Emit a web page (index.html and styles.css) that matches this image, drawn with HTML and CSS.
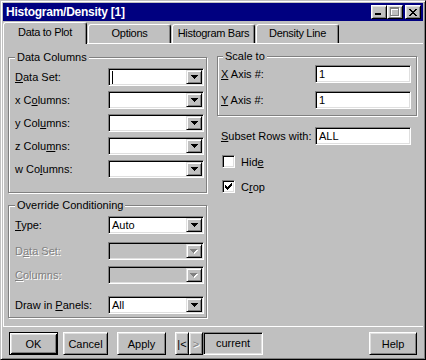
FILE: index.html
```html
<!DOCTYPE html>
<html lang="en">
<head>
    <meta charset="UTF-8">
    <title>Histogram/Density [1]</title>
    <link rel="stylesheet" href="styles.css">
</head>
<body>
    <div class="window">
        <div class="titlebar">
            <span class="title">Histogram/Density [1]</span>
            <div class="title-btns">
                <div class="tbtn tbtn-min">
                    <svg width="6" height="2"><rect width="6" height="2" fill="#000"/></svg>
                </div>
                <div class="tbtn tbtn-max">
                    <svg width="10" height="10" shape-rendering="crispEdges">
                        <path d="M1 1h9v9h-9z M2 3v6h7v-6z" fill="#fff" fill-rule="evenodd"/>
                        <path d="M0 0h9v9h-9z M1 2v6h7v-6z" fill="#808080" fill-rule="evenodd"/>
                    </svg>
                </div>
                <div class="tbtn tbtn-close">
                    <svg width="8" height="7" shape-rendering="crispEdges">
                        <path d="M0 0h2v1h-2z M6 0h2v1h-2z M1 1h2v1h-2z M5 1h2v1h-2z M2 2h4v1h-4z M3 3h2v1h-2z M2 4h4v1h-4z M1 5h2v1h-2z M5 5h2v1h-2z M0 6h2v1h-2z M6 6h2v1h-2z" fill="#000"/>
                    </svg>
                </div>
            </div>
        </div>

        <div class="tabs">
            <div class="tab active">Data to Plot</div>
            <div class="tab">Options</div>
            <div class="tab">Histogram Bars</div>
            <div class="tab">Density Line</div>
        </div>

        <div class="panel">
            <div class="col col-left">
                <div class="group group-data">
                    <span class="group-title">Data Columns</span>
                    <div class="rows">
                        <div class="row">
                            <span><u>D</u>ata Set:</span>
                            <div class="combo"><span class="combo-text"><i class="caret"></i></span><span class="drop"><svg width="7" height="4" shape-rendering="crispEdges"><path d="M0 0H7V1H6V2H5V3H4V4H3V3H2V2H1V1H0Z"/></svg></span></div>
                        </div>
                        <div class="row">
                            <span>x C<u>o</u>lumns:</span>
                            <div class="combo"><span class="combo-text"></span><span class="drop"><svg width="7" height="4" shape-rendering="crispEdges"><path d="M0 0H7V1H6V2H5V3H4V4H3V3H2V2H1V1H0Z"/></svg></span></div>
                        </div>
                        <div class="row">
                            <span>y Col<u>u</u>mns:</span>
                            <div class="combo"><span class="combo-text"></span><span class="drop"><svg width="7" height="4" shape-rendering="crispEdges"><path d="M0 0H7V1H6V2H5V3H4V4H3V3H2V2H1V1H0Z"/></svg></span></div>
                        </div>
                        <div class="row">
                            <span>z Colu<u>m</u>ns:</span>
                            <div class="combo"><span class="combo-text"></span><span class="drop"><svg width="7" height="4" shape-rendering="crispEdges"><path d="M0 0H7V1H6V2H5V3H4V4H3V3H2V2H1V1H0Z"/></svg></span></div>
                        </div>
                        <div class="row">
                            <span>w Co<u>l</u>umns:</span>
                            <div class="combo"><span class="combo-text"></span><span class="drop"><svg width="7" height="4" shape-rendering="crispEdges"><path d="M0 0H7V1H6V2H5V3H4V4H3V3H2V2H1V1H0Z"/></svg></span></div>
                        </div>
                    </div>
                </div>

                <div class="group group-override">
                    <span class="group-title">Override Conditioning</span>
                    <div class="row row-type">
                        <span><u>T</u>ype:</span>
                        <div class="combo"><span class="combo-text">Auto</span><span class="drop"><svg width="7" height="4" shape-rendering="crispEdges"><path d="M0 0H7V1H6V2H5V3H4V4H3V3H2V2H1V1H0Z"/></svg></span></div>
                    </div>
                    <div class="row row-dset">
                        <span class="disabled">D<u>a</u>ta Set:</span>
                        <div class="combo off"><span class="combo-text"></span><span class="drop"><svg width="8" height="5" shape-rendering="crispEdges"><path d="M1 1H8V2H7V3H6V4H5V5H4V4H3V3H2V2H1Z" fill="#fff"/><path d="M0 0H7V1H6V2H5V3H4V4H3V3H2V2H1V1H0Z" fill="#808080"/></svg></span></div>
                    </div>
                    <div class="row row-cols">
                        <span class="disabled"><u>C</u>olumns:</span>
                        <div class="combo off"><span class="combo-text"></span><span class="drop"><svg width="8" height="5" shape-rendering="crispEdges"><path d="M1 1H8V2H7V3H6V4H5V5H4V4H3V3H2V2H1Z" fill="#fff"/><path d="M0 0H7V1H6V2H5V3H4V4H3V3H2V2H1V1H0Z" fill="#808080"/></svg></span></div>
                    </div>
                    <div class="row row-panels">
                        <span>Draw in <u>P</u>anels:</span>
                        <div class="combo"><span class="combo-text">All</span><span class="drop"><svg width="7" height="4" shape-rendering="crispEdges"><path d="M0 0H7V1H6V2H5V3H4V4H3V3H2V2H1V1H0Z"/></svg></span></div>
                    </div>
                </div>
            </div>

            <div class="col col-right">
                <div class="group group-scale">
                    <span class="group-title">Scale to</span>
                    <div class="row row-x">
                        <span><u>X</u> Axis #:</span>
                        <div class="field">1</div>
                    </div>
                    <div class="row row-y">
                        <span><u>Y</u> Axis #:</span>
                        <div class="field">1</div>
                    </div>
                </div>

                <div class="row row-subset">
                    <span><u>S</u>ubset Rows with:</span>
                    <div class="field">ALL</div>
                </div>

                <div class="check check-hide">
                    <span class="box"></span>
                    <span>Hid<u>e</u></span>
                </div>
                <div class="check check-crop">
                    <span class="box">
                        <svg width="7" height="7" shape-rendering="crispEdges"><path d="M6 0h1v1h-1z M5 1h2v1h-2z M0 2h1v1h-1z M4 2h3v1h-3z M0 3h2v1h-2z M3 3h3v1h-3z M0 4h5v1h-5z M1 5h3v1h-3z M2 6h1v1h-1z"/></svg>
                    </span>
                    <span>C<u>r</u>op</span>
                </div>
            </div>
        </div>

        <div class="buttons">
            <button class="btn default btn-ok">OK</button>
            <button class="btn btn-cancel">Cancel</button>
            <button class="btn btn-apply">Apply</button>
            <button class="btn btn-nav btn-first">|&lt;</button>
            <button class="btn btn-nav btn-next">&gt;</button>
            <div class="current">current</div>
            <button class="btn btn-help">Help</button>
        </div>
    </div>
</body>
</html>
```

FILE: styles.css
```css
body {
    margin: 0;
    background-color: #c0c0c0;
    font-family: "Liberation Sans", Arial, sans-serif;
    font-size: 11px;
    color: #000;
}

.window {
    width: 426px;
    height: 360px;
    box-sizing: border-box;
    background-color: #c0c0c0;
    border: 1px solid;
    border-color: #c0c0c0 #000 #000 #c0c0c0;
    box-shadow: inset 1px 1px #fff, inset -1px -1px #808080;
    padding: 2px;
    display: flex;
    flex-direction: column;
    overflow: hidden;
}

/* barra de titulo */
.titlebar {
    flex: none;
    height: 18px;
    background-color: #000080;
    display: flex;
    align-items: center;
    justify-content: space-between;
    padding: 0 2px 0 3px;
}

.title {
    color: #fff;
    font-weight: bold;
    font-size: 12px;
    letter-spacing: -0.25px;
}

.title-btns {
    display: flex;
}

.tbtn {
    box-sizing: border-box;
    width: 16px;
    height: 14px;
    background-color: #c0c0c0;
    border: 1px solid;
    border-color: #fff #000 #000 #fff;
    box-shadow: inset 1px 1px #dfdfdf, inset -1px -1px #808080;
    display: flex;
    align-items: center;
    justify-content: center;
}

.tbtn svg {
    display: block;
}

.tbtn-min {
    align-items: flex-end;
    justify-content: flex-start;
    padding: 0 0 3px 3px;
}

.tbtn-close {
    margin-left: 2px;
}

/* abas */
.tabs {
    flex: none;
    height: 22px;
    display: flex;
    align-items: flex-end;
}

.tab {
    box-sizing: border-box;
    width: 83px;
    height: 19px;
    margin-left: 1px;
    border: 1px solid;
    border-bottom: 0;
    border-color: #fff #000 #000 #fff;
    border-radius: 3px 3px 0 0;
    box-shadow: inset -1px 0 #808080;
    text-align: center;
    line-height: 17px;
    letter-spacing: -0.3px;
    white-space: nowrap;
}

.tab.active {
    width: 84px;
    height: 22px;
    margin-left: 0;
    margin-bottom: -1px;
    position: relative;
    z-index: 1;
    background-color: #c0c0c0;
    line-height: 19px;
}

.panel {
    flex: none;
    height: 284px;
    box-sizing: border-box;
    border-top: 1px solid #fff;
    border-left: 1px solid #fff;
    border-bottom: 1px solid #fff;
    padding-left: 4px;
    display: flex;
    align-items: flex-start;
    gap: 10px;
}

.col {
    display: flex;
    flex-direction: column;
}

.col-left {
    width: 199px;
}

.col-right {
    width: 200px;
}

/* caixas de grupo */
.group {
    box-sizing: border-box;
    border: 1px solid #808080;
    box-shadow: inset 1px 1px #fff, 1px 1px #fff;
}

.group-title {
    display: block;
    width: fit-content;
    background-color: #c0c0c0;
    padding: 0 2px;
    line-height: 13px;
    margin-top: -7px;
}

.group-data {
    margin-top: 13px;
    padding: 0 2px 14px 6px;
}

.group-override {
    margin-top: 12px;
    padding: 0 2px 3px 6px;
}

.group-scale {
    margin-top: 12px;
    padding: 0 5px 6px 3px;
}

.group-scale .group-title {
    margin-left: 2px;
}

.rows {
    display: flex;
    flex-direction: column;
    gap: 5px;
    margin-top: 4px;
}

.row {
    height: 18px;
    display: flex;
    align-items: center;
    justify-content: space-between;
    white-space: nowrap;
}

.row-type {
    margin-top: 4px;
}

.row-dset {
    margin-top: 8px;
}

.row-cols {
    margin-top: 6px;
}

.row-panels {
    margin-top: 12px;
}

.row-x {
    margin-top: 2px;
}

.row-y {
    margin-top: 8px;
}

.row-subset {
    margin-top: 11px;
    padding: 0 6px 0 4px;
}

.disabled {
    color: #808080;
    text-shadow: 1px 1px #fff;
}

/* combos e campos */
.combo,
.field {
    box-sizing: border-box;
    width: 96px;
    height: 18px;
    border: 1px solid;
    border-color: #808080 #fff #fff #808080;
    box-shadow: inset 1px 1px #000, inset -1px -1px #dfdfdf;
    background-color: #fff;
}

.combo {
    display: flex;
    padding: 1px;
}

.combo.off {
    background-color: #c0c0c0;
}

.combo-text {
    flex: 1;
    padding-left: 2px;
    line-height: 14px;
    display: flex;
    align-items: center;
}

.caret {
    display: block;
    width: 1px;
    height: 13px;
    background-color: #000;
}

.drop {
    box-sizing: border-box;
    width: 16px;
    height: 14px;
    background-color: #c0c0c0;
    border: 1px solid;
    border-color: #dfdfdf #000 #000 #dfdfdf;
    box-shadow: inset 1px 1px #fff, inset -1px -1px #808080;
    display: flex;
    align-items: center;
    justify-content: center;
}

.drop svg {
    display: block;
}

.field {
    padding-left: 3px;
    line-height: 16px;
}

/* checkboxes */
.check {
    display: flex;
    align-items: center;
    gap: 6px;
    height: 13px;
    padding-left: 5px;
}

.check-hide {
    margin-top: 10px;
}

.check-crop {
    margin-top: 12px;
}

.box {
    box-sizing: border-box;
    width: 13px;
    height: 13px;
    background-color: #fff;
    border: 1px solid;
    border-color: #808080 #fff #fff #808080;
    box-shadow: inset 1px 1px #000, inset -1px -1px #dfdfdf;
    display: flex;
    align-items: center;
    justify-content: center;
}

.box svg {
    display: block;
}

/* botoes de baixo */
.buttons {
    flex: none;
    height: 23px;
    margin-top: 5px;
    padding: 0 6px;
    display: flex;
}

.btn {
    box-sizing: border-box;
    height: 23px;
    padding: 0;
    background-color: #c0c0c0;
    border: 1px solid;
    border-color: #fff #000 #000 #fff;
    box-shadow: inset 1px 1px #dfdfdf, inset -1px -1px #808080;
    font-family: inherit;
    font-size: 11px;
    color: #000;
}

.btn.default {
    border-color: #000;
    box-shadow: inset 1px 1px #fff, inset -1px -1px #000, inset 2px 2px #dfdfdf, inset -2px -2px #808080;
}

.btn-ok {
    width: 49px;
}

.btn-cancel {
    width: 45px;
    margin-left: 5px;
}

.btn-apply {
    width: 49px;
    margin-left: 9px;
}

.btn-nav {
    width: 14px;
}

.btn-first {
    margin-left: 9px;
}

.btn-next {
    color: #808080;
    text-shadow: 1px 1px #fff;
}

.current {
    box-sizing: border-box;
    width: 60px;
    height: 23px;
    border: 1px solid;
    border-color: #808080 #fff #fff #808080;
    box-shadow: inset 1px 1px #000, inset -1px -1px #dfdfdf;
    text-align: center;
    line-height: 21px;
}

.btn-help {
    width: 48px;
    margin-left: auto;
}
```
